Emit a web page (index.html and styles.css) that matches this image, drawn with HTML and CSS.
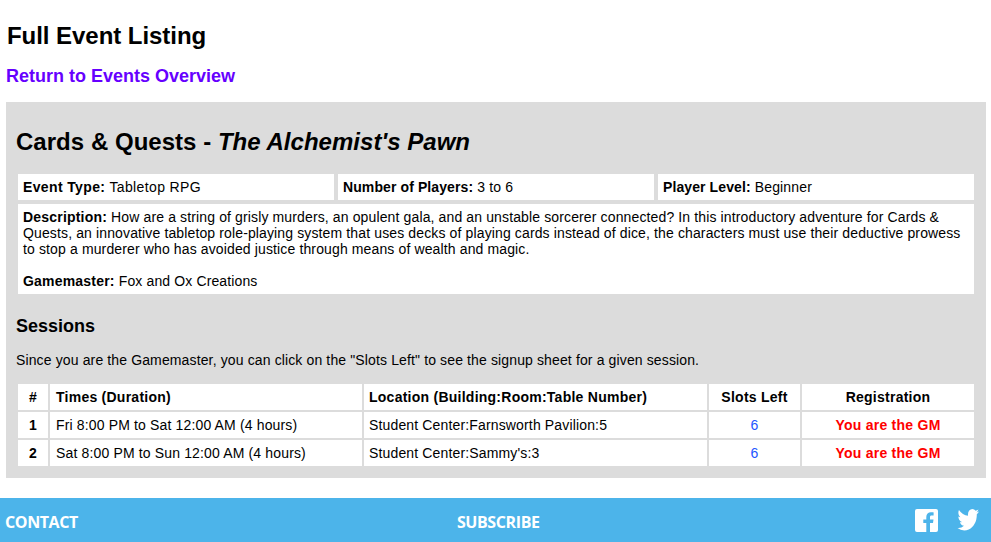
FILE: index.html
```html
<!DOCTYPE html>
<html lang="en">
<head>
    <meta charset="UTF-8">
    <meta name="viewport" content="width=device-width, initial-scale=1.0">
    <title>Full Event Listing</title>
    <link rel="stylesheet" href="styles.css">
</head>
<body>
    <div class="content">
        <h1>Full Event Listing</h1>
        <a class="back-link" href="#">Return to Events Overview</a>

        <div class="event-panel">
            <h2>Cards &amp; Quests - <em>The Alchemist's Pawn</em></h2>

            <div class="info-grid">
                <div class="info-cell event-type"><b>Event Type:</b> Tabletop RPG</div>
                <div class="info-cell"><b>Number of Players:</b> 3 to 6</div>
                <div class="info-cell"><b>Player Level:</b> Beginner</div>
                <div class="info-cell info-wide">
                    <p><b>Description:</b> How are a string of grisly murders, an opulent gala, and an unstable sorcerer connected? In this introductory adventure for Cards &amp; Quests, an innovative tabletop role-playing system that uses decks of playing cards instead of dice, the characters must use their deductive prowess to stop a murderer who has avoided justice through means of wealth and magic.</p>
                    <p><b>Gamemaster:</b> Fox and Ox Creations</p>
                </div>
            </div>

            <h3>Sessions</h3>
            <p class="note">Since you are the Gamemaster, you can click on the "Slots Left" to see the signup sheet for a given session.</p>

            <table class="sessions">
                <colgroup>
                    <col class="col-num">
                    <col class="col-time">
                    <col class="col-loc">
                    <col class="col-slots">
                    <col class="col-reg">
                </colgroup>
                <tr>
                    <th class="center">#</th>
                    <th class="time">Times (Duration)</th>
                    <th>Location (Building:Room:Table Number)</th>
                    <th class="center">Slots Left</th>
                    <th class="center">Registration</th>
                </tr>
                <tr>
                    <td class="center"><b>1</b></td>
                    <td class="time">Fri 8:00 PM to Sat 12:00 AM (4 hours)</td>
                    <td>Student Center:Farnsworth Pavilion:5</td>
                    <td class="center"><a class="slots" href="#">6</a></td>
                    <td class="center gm">You are the GM</td>
                </tr>
                <tr>
                    <td class="center"><b>2</b></td>
                    <td class="time">Sat 8:00 PM to Sun 12:00 AM (4 hours)</td>
                    <td>Student Center:Sammy's:3</td>
                    <td class="center"><a class="slots" href="#">6</a></td>
                    <td class="center gm">You are the GM</td>
                </tr>
            </table>
        </div>
    </div>

    <div class="footer">
        <a class="footer-link" href="#">CONTACT</a>
        <a class="footer-link subscribe" href="#">SUBSCRIBE</a>
        <div class="social">
            <svg class="fb-icon" viewBox="0 0 23 23"><path fill="#fff" d="M2 0h19a2 2 0 0 1 2 2v19a2 2 0 0 1-2 2h-6v-9h3l.5-3.5h-3.5v-2.2c0-1 .3-1.7 1.7-1.7h1.9V3.4c-.3 0-1.4-.1-2.7-.1-2.7 0-4.6 1.7-4.6 4.7v2.5h-3v3.5h3v9H2a2 2 0 0 1-2-2V2a2 2 0 0 1 2-2z"/></svg>
            <svg class="tw-icon" viewBox="0 256 1684 1370" preserveAspectRatio="none"><path fill="#fff" d="M1684 408q-67 98-162 167 1 14 1 42 0 130-38 259.5t-115.5 248.5-184.5 210.5-258 146-323 54.5q-271 0-496-145 35 4 78 4 225 0 401-138-105-2-188-64.5t-114-159.5q33 5 61 5 43 0 85-11-112-23-185.5-111.5t-73.5-205.5v-4q68 38 146 41-66-44-105-115t-39-154q0-88 44-163 121 149 294.5 238.5t371.5 99.5q-8-38-8-74 0-134 94.5-228.5t228.5-94.5q140 0 236 102 109-21 205-78-37 115-142 178 92-10 184-50z"/></svg>
        </div>
    </div>
</body>
</html>
```

FILE: styles.css
```css
body {
    margin: 0;
    font-family: 'Liberation Sans', Arial, sans-serif;
    font-size: 14px;
    letter-spacing: 0.15px;
    color: #000;
    background: #fff;
}

b, th {
    letter-spacing: 0.25px;
}

.content {
    padding: 0 5px 20px 6px;
}

h1 {
    font-size: 24px;
    line-height: 28px;
    letter-spacing: -0.05px;
    margin: 0 0 0 1px;
    padding-top: 22px;
}

.back-link {
    display: block;
    font-size: 18px;
    font-weight: bold;
    line-height: 20px;
    letter-spacing: 0;
    margin-top: 16px;
    color: #6600ff;
    text-decoration: none;
}

.event-panel {
    background-color: #dcdcdc;
    margin-top: 16px;
    padding: 26px 12px 10px 12px;
}

h2 {
    font-size: 24px;
    line-height: 28px;
    letter-spacing: 0.03px;
    margin: 0 0 18px -2px;
}

.info-grid {
    display: grid;
    grid-template-columns: repeat(3, 1fr);
    gap: 4px;
}

.info-cell {
    background: #fff;
    padding: 5px 5px;
    line-height: 16px;
}

.info-cell b {
    letter-spacing: 0.1px;
}

.event-type, .event-type b {
    letter-spacing: 0.37px;
}

.info-wide {
    grid-column: span 3;
    letter-spacing: 0.13px;
}

.info-wide b {
    letter-spacing: 0.2px;
}

.info-wide p {
    margin: 0;
}

.info-wide p + p {
    margin-top: 16px;
}

h3 {
    font-size: 18px;
    line-height: 20px;
    letter-spacing: 0;
    margin: 22px 0 0 -2px;
}

.note {
    margin: 16px 0 0 -2px;
    line-height: 16px;
    letter-spacing: 0.13px;
}

.sessions {
    width: 960px;
    table-layout: fixed;
    border-collapse: collapse;
    margin: 14px 0 0 -2px;
}

.col-num { width: 32px; }
.col-time { width: 314px; }
.col-loc { width: 345px; }
.col-slots { width: 93px; }

.sessions th, .sessions td {
    background: #fff;
    border: 2px solid #dcdcdc;
    padding: 0 5px;
    height: 26px;
    line-height: 16px;
    text-align: left;
}

.sessions .time {
    padding-left: 6px;
}

.sessions .center {
    text-align: center;
}

.slots {
    color: #2255ff;
    text-decoration: none;
}

.gm {
    color: #ff0000;
    font-weight: bold;
    letter-spacing: 0.25px;
}

.footer {
    display: flex;
    align-items: center;
    height: 44px;
    padding: 0 12px 0 5px;
    background-color: #4cb4ea;
}

.footer-link {
    font-family: 'Open Sans', sans-serif;
    font-size: 16px;
    font-weight: bold;
    letter-spacing: -0.4px;
    padding-top: 3px;
    color: #fff;
    text-decoration: none;
}

.subscribe {
    margin-left: 379px;
}

.social {
    display: flex;
    align-items: center;
    gap: 18px;
    margin-left: auto;
}

.fb-icon, .tw-icon {
    display: block;
    width: 23px;
    height: 23px;
}
```
